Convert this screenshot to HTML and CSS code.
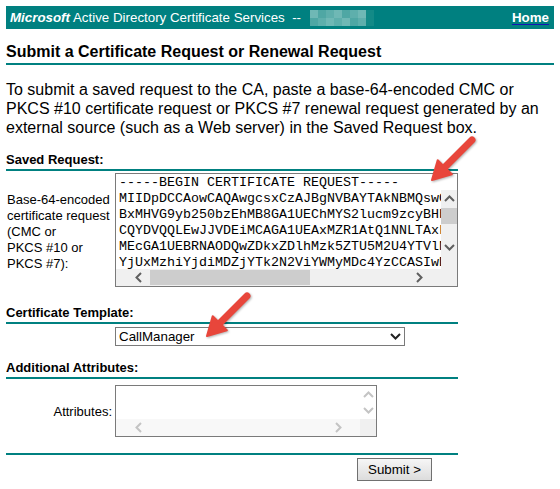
FILE: index.html
```html
<!DOCTYPE html>
<html lang="en">
<head>
  <meta charset="UTF-8">
  <title>Microsoft Active Directory Certificate Services</title>
  <link rel="stylesheet" href="styles.css">
</head>
<body>

  <div class="topbar">
    <span class="brand"><b><i>Microsoft</i></b> Active Directory Certificate Services&nbsp; --</span>
    <span class="ca-name">
      <span class="px p2"></span><span class="px p1"></span><span class="px p3"></span><span class="px p2"></span><span class="px p1"></span><span class="px p3"></span><span class="px p2"></span><span class="px p0"></span>
      <span class="px p1"></span><span class="px p3"></span><span class="px p2"></span><span class="px p3"></span><span class="px p2"></span><span class="px p1"></span><span class="px p3"></span><span class="px p0"></span>
    </span>
    <a class="home" href="#">Home</a>
  </div>

  <h1 class="page-title">Submit a Certificate Request or Renewal Request</h1>

  <p class="intro">To submit a saved request to the CA, paste a base-64-encoded CMC or PKCS #10 certificate request or PKCS #7 renewal request generated by an external source (such as a Web server) in the Saved Request box.</p>

  <form class="req-form" onsubmit="return false">

    <div class="sect-head sect-saved">Saved Request:</div>
    <div class="field field-saved">
      <label class="field-label label-saved" for="CertRequest">Base-64-encoded<br>certificate request<br>(CMC or<br>PKCS #10 or<br>PKCS #7):</label>
      <div class="textbox textbox-big">
        <textarea id="CertRequest" wrap="off" spellcheck="false">-----BEGIN CERTIFICATE REQUEST-----
MIIDpDCCAowCAQAwgcsxCzAJBgNVBAYTAkNBMQswCQYDVQQIEwJPTjEQMA4GA1UE
BxMHVG9yb250bzEhMB8GA1UEChMYS2lucm9zcyBHbG9iYWwgU2VydmljZXMxCzAJ
CQYDVQQLEwJJVDEiMCAGA1UEAxMZR1AtQ1NNLTAxLmtpbnJvc3MuaW50ZXJuYWwx
MEcGA1UEBRNAODQwZDkxZDlhMzk5ZTU5M2U4YTVlNjE2ZWY5YWY0NjQxYjUxMzhi
YjUxMzhiYjdiMDZjYTk2N2ViYWMyMDc4YzCCASIwDQYJKoZIhvcNAQEBBQADggEP</textarea>
        <div class="vscroll">
          <span class="sb-btn">
            <svg width="11" height="7" viewBox="0 0 11 7"><polyline points="1,6 5.5,1.5 10,6" /></svg>
          </span>
          <span class="v-thumb"></span>
          <span class="sb-btn sb-down">
            <svg width="11" height="7" viewBox="0 0 11 7"><polyline points="1,1 5.5,5.5 10,1" /></svg>
          </span>
        </div>
        <div class="hscroll">
          <span class="sb-btn">
            <svg width="7" height="11" viewBox="0 0 7 11"><polyline points="6,1 1.5,5.5 6,10" /></svg>
          </span>
          <span class="h-thumb"></span>
          <span class="sb-btn sb-right">
            <svg width="7" height="11" viewBox="0 0 7 11"><polyline points="1,1 5.5,5.5 1,10" /></svg>
          </span>
        </div>
        <div class="corner"></div>
      </div>
    </div>

    <div class="sect-head sect-template">Certificate Template:</div>
    <div class="field field-template">
      <div class="select-wrap">
        <select id="lbCertTemplate">
          <option>CallManager</option>
        </select>
        <svg class="select-arrow" width="11" height="7" viewBox="0 0 11 7"><polyline points="1,1 5.5,5.5 10,1" /></svg>
      </div>
    </div>

    <div class="sect-head sect-attrib">Additional Attributes:</div>
    <div class="field field-attrib">
      <label class="field-label label-right" for="CertAttrib">Attributes:</label>
      <div class="textbox textbox-small">
        <textarea id="CertAttrib" wrap="off" spellcheck="false"></textarea>
        <div class="vscroll vscroll-off">
          <span class="sb-btn">
            <svg width="11" height="7" viewBox="0 0 11 7"><polyline points="1,6 5.5,1.5 10,6" /></svg>
          </span>
          <span class="sb-btn">
            <svg width="11" height="7" viewBox="0 0 11 7"><polyline points="1,1 5.5,5.5 10,1" /></svg>
          </span>
        </div>
        <div class="hscroll hscroll-off">
          <span class="sb-btn">
            <svg width="7" height="11" viewBox="0 0 7 11"><polyline points="6,1 1.5,5.5 6,10" /></svg>
          </span>
          <span class="sb-btn sb-right">
            <svg width="7" height="11" viewBox="0 0 7 11"><polyline points="1,1 5.5,5.5 1,10" /></svg>
          </span>
        </div>
        <div class="corner"></div>
      </div>
    </div>

    <div class="form-foot">
      <button type="submit" class="btn-submit">Submit &gt;</button>
    </div>
  </form>

  <!-- annotation arrows drawn over the page -->
  <svg class="callout callout-request" width="56" height="56" viewBox="0 0 56 56">
    <line x1="48" y1="8" x2="21" y2="35" />
    <polygon points="8,48 27.8,42.3 13.7,28.2" />
  </svg>
  <svg class="callout callout-template" width="56" height="56" viewBox="0 0 56 56">
    <line x1="48" y1="8" x2="21" y2="35" />
    <polygon points="8,48 27.8,42.3 13.7,28.2" />
  </svg>

</body>
</html>
```

FILE: styles.css
```css
body {
  margin: 6px;
  font-family: "Liberation Sans", Arial, sans-serif;
  font-size: 13px;
  color: #000;
  background: #fff;
}

/* top bar */
.topbar {
  display: flex;
  align-items: center;
  height: 23px;
  padding: 0 5px 0 4px;
  background: #008080;
  color: #fff;
  font-size: 13.33px;
}

.brand {
  white-space: nowrap;
}

.ca-name {
  display: inline-grid;
  grid-template-columns: repeat(8, 8px);
  grid-auto-rows: 8px;
  margin-left: 9px;
}

.px.p0 { background: #138a87; }
.px.p1 { background: #4fa7a4; }
.px.p2 { background: #6fb8b5; }
.px.p3 { background: #5eafac; }

.home {
  margin-left: auto;
  color: #fff;
  font-weight: bold;
  text-decoration: underline #1515b5;
  text-underline-offset: 2px;
}

/* headings */
.page-title {
  margin: 14px 0 0;
  padding-bottom: 2px;
  font-size: 16px;
  line-height: 18px;
  border-bottom: 2px solid #008080;
}

.intro {
  margin: 15px 0 0;
  font-size: 16px;
  line-height: 19px;
}

/* form */
.req-form {
  width: 452px;
}

.sect-head {
  padding-bottom: 2px;
  font-weight: bold;
  line-height: 15px;
  border-bottom: 2px solid #008080;
}

.sect-saved { margin-top: 15px; }
.sect-template { margin-top: 18px; }
.sect-attrib { margin-top: 14px; }

.field {
  display: grid;
  grid-template-columns: 109px auto;
  align-items: center;
  line-height: 15px;
}

.field-saved { margin-top: 2px; }
.field-template { margin-top: 3px; }
.field-attrib { margin-top: 6px; }

.field-label {
  padding-left: 1px;
  white-space: nowrap;
}

.label-saved {
  padding-top: 3px;
  line-height: 16px;
}

.label-right {
  padding-right: 3px;
  text-align: right;
}

/* text boxes with drawn scrollbars */
.textbox {
  display: grid;
  grid-template-columns: 1fr 16px;
  grid-template-rows: 1fr 17px;
  border: 1px solid #7a7a7a;
  background: #fff;
}

.textbox-big {
  width: 341px;
  height: 112px;
}

.textbox-small {
  width: 260px;
  height: 50px;
}

.textbox textarea {
  margin: 0;
  padding: 1px 3px 0;
  border: none;
  outline: none;
  resize: none;
  overflow: hidden;
  white-space: pre;
  font-family: "Liberation Mono", "Courier New", monospace;
  font-size: 13.33px;
  line-height: 16px;
  color: #000;
  background: #fff;
}

.vscroll {
  display: flex;
  flex-direction: column;
  padding-top: 16px;
  background: linear-gradient(#fff 16px, #f0f0f0 16px);
}

.hscroll {
  display: flex;
  align-items: center;
  padding-left: 14px;
  background: #f0f0f0;
}

.sb-btn {
  display: flex;
  align-items: center;
  justify-content: center;
  width: 16px;
  height: 16px;
}

.vscroll .sb-btn {
  height: 17px;
}

.sb-btn svg polyline {
  fill: none;
  stroke: #5f5f5f;
  stroke-width: 2;
}

.v-thumb {
  height: 16px;
  margin-top: 1px;
  background: #cdcdcd;
}

.sb-down {
  margin-top: 15px;
}

.h-thumb {
  width: 160px;
  height: 15px;
  margin-left: 4px;
  background: #cdcdcd;
}

.sb-right {
  margin-left: auto;
  margin-right: 14px;
}

.corner {
  background: #f0f0f0;
}

.vscroll-off {
  padding-top: 0;
  background: #fff;
}

.vscroll-off .sb-btn {
  flex: 1;
  height: auto;
}

.hscroll-off {
  background: #f8f8f8;
}

.vscroll-off .sb-btn svg polyline,
.hscroll-off .sb-btn svg polyline {
  stroke: #c4c4c4;
}

/* template select */
.select-wrap {
  grid-column: 2;
  display: flex;
  align-items: center;
  width: 288px;
  height: 17px;
  border: 1px solid #7a7a7a;
  background: #fff;
}

.select-wrap select {
  flex: 1;
  height: 17px;
  margin: 0;
  padding: 0 0 0 3px;
  border: none;
  outline: none;
  appearance: none;
  background: transparent;
  font-family: "Liberation Sans", Arial, sans-serif;
  font-size: 13.33px;
  color: #000;
}

.select-arrow {
  margin-right: 3px;
}

.select-arrow polyline {
  fill: none;
  stroke: #222;
  stroke-width: 2;
}

/* footer */
.form-foot {
  display: flex;
  justify-content: flex-end;
  margin-top: 16px;
  padding: 3px 26px 0 0;
  border-top: 2px solid #008080;
}

.btn-submit {
  width: 75px;
  height: 23px;
  padding: 0;
  border: 1px solid #707070;
  background: linear-gradient(#f6f6f6, #dcdcdc);
  font-family: "Liberation Sans", Arial, sans-serif;
  font-size: 13.33px;
  color: #000;
}

/* red annotation arrows */
.callout {
  position: absolute;
  filter: drop-shadow(1px 1px 1px rgba(0, 0, 0, 0.3));
}

.callout line {
  stroke: #e8463b;
  stroke-width: 7;
  stroke-linecap: round;
}

.callout polygon {
  fill: #e8463b;
  stroke: #e8463b;
  stroke-width: 2;
  stroke-linejoin: round;
}

.callout-request {
  left: 424px;
  top: 132px;
}

.callout-template {
  left: 199px;
  top: 288px;
}
```
